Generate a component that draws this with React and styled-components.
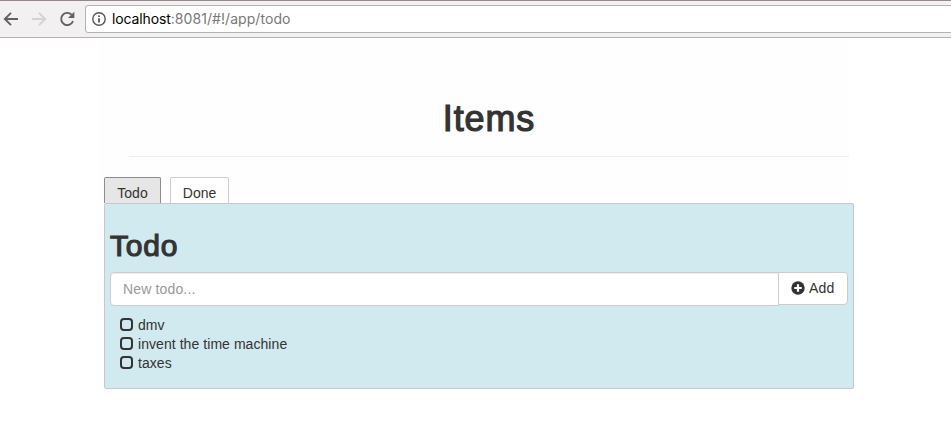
import React from "react";
import styled, { createGlobalStyle } from "styled-components";

const Global = createGlobalStyle`
  * { box-sizing: border-box; }
  body { margin: 0; background: #fff; color: #333; overflow: hidden;
    font: 14px/20px "Liberation Sans", Arial, sans-serif; }
`;

const Toolbar = styled.header`
  display: flex;
  height: 38px;
  padding-top: 4px;
  background: #f2f0f1;
  border-top: 1px solid #948889;
  border-bottom: 1px solid #b3b1b2;
`;
const NavIcons = styled.svg`
  width: 85px;
  height: 28px;
  flex: none;
`;
const Address = styled.div`
  flex: 1;
  height: 28px;
  display: flex;
  align-items: center;
  padding-left: 6px;
  margin-right: -4px;
  background: #fff;
  border: 1px solid #b3b1b2;
  border-radius: 3px;
  font: 14px/26px Inter, sans-serif;
  letter-spacing: 0.06px;
  color: #777;
  white-space: nowrap;
`;
const InfoIcon = styled.svg`
  width: 14px;
  height: 14px;
  margin-right: 6px;
`;
const Host = styled.span`
  color: #000;
  letter-spacing: -0.12px;
`;
const Page = styled.main`
  width: 750px;
  margin-left: 99px;
`;
const Top = styled.div`
  height: 165px;
  background: #fefefe;
`;
const PageHeader = styled.div`
  height: 119px;
  margin-left: 30px;
  margin-bottom: 20px;
  padding-top: 61px;
  border-bottom: 1px solid #eee;
  text-align: center;
`;
const Heading = styled.h1`
  margin: 0;
  font-size: 36px;
  line-height: 40px;
  font-weight: 400;
  letter-spacing: 0.9px;
  -webkit-text-stroke: 1.2px #333;
`;
const Tabs = styled.nav`
  display: flex;
  gap: 9px;
  padding-left: 5px;
`;
const Tab = styled.button`
  width: ${(p) => p.$width}px;
  height: 26px;
  padding: 5px 0 0;
  border: 1px solid ${(p) => (p.$active ? "#8c8c8c" : "#ccc")};
  border-bottom: 0;
  border-radius: 2px 2px 0 0;
  background: ${(p) => (p.$active ? "#e6e6e6" : "#fff")};
  color: #333;
  font: inherit;
`;
const Panel = styled.section`
  width: 750px;
  height: 186px;
  margin-left: 5px;
  padding: 25px 5px 0;
  border: 1px solid #c8c8cc;
  border-radius: 2px;
  background: #d1eaf0;
`;
const PanelTitle = styled.h2`
  margin: 0 0 9px;
  font-size: 30px;
  line-height: 34px;
  font-weight: 400;
  letter-spacing: 0.8px;
  -webkit-text-stroke: 1.2px #333;
`;
const InputGroup = styled.div`
  display: flex;
  align-items: flex-start;
`;
const Field = styled.input`
  width: 669px;
  height: 34px;
  padding: 0 12px;
  border: 1px solid #ccc;
  border-radius: 4px 0 0 4px;
  box-shadow: inset 0 1px 1px rgba(0, 0, 0, 0.075);
  font: inherit;
  letter-spacing: 0.15px;
  &::placeholder { color: #999; opacity: 1; }
`;
const AddButton = styled.button`
  display: flex;
  align-items: center;
  gap: 4px;
  width: 70px;
  height: 33px;
  margin-left: -1px;
  padding: 0 0 1px 12px;
  border: 1px solid #ccc;
  border-radius: 0 4px 4px 0;
  background: #fff;
  color: #333;
  font: inherit;
  letter-spacing: 0.2px;
`;
const List = styled.ul`
  list-style: none;
  margin: 9px 0 0;
  padding: 0 0 0 10px;
  letter-spacing: 0.06px;
`;
const Item = styled.li`
  display: flex;
  align-items: center;
  gap: 5px;
  height: 19px;
`;
const Checkbox = styled.span`
  width: 13px;
  height: 13px;
  border: 2px solid #333;
  border-radius: 4px;
`;

export default function App() {
  return (
    <>
      <Global />
      <Toolbar>
        <NavIcons viewBox="0 0 85 28" fill="none" strokeWidth="1.9">
          <path d="M18 14H5.2M11 7.8L4.8 14L11 20.2" stroke="#606060" />
          <path d="M32 14H44.8M39 7.8L45.2 14L39 20.2" stroke="#d4d2d3" />
          <path d="M71.6 9.7A6.1 6.1 0 1 0 73 16" stroke="#606060" />
          <path d="M74.3 6.8V13H68Z" fill="#606060" />
        </NavIcons>
        <Address>
          <InfoIcon viewBox="0 0 14 14" fill="none" stroke="#555">
            <circle cx="7" cy="7" r="6.2" strokeWidth="1.4" />
            <path d="M7 6.3V10.5M7 3.4V5" strokeWidth="1.8" />
          </InfoIcon>
          <Host>localhost</Host>:8081/#!/app/todo
        </Address>
      </Toolbar>
      <Page>
        <Top>
          <PageHeader><Heading>Items</Heading></PageHeader>
          <Tabs>
            <Tab $active $width={57}>Todo</Tab>
            <Tab $width={59}>Done</Tab>
          </Tabs>
        </Top>
        <Panel>
          <PanelTitle>Todo</PanelTitle>
          <InputGroup>
            <Field placeholder="New todo..." />
            <AddButton>
              <svg width="14" height="14" viewBox="0 0 14 14">
                <circle cx="7" cy="7" r="6.7" fill="#333" />
                <path d="M7 3.3V10.7M3.3 7H10.7" stroke="#fff" strokeWidth="2.2" />
              </svg>
              Add
            </AddButton>
          </InputGroup>
          <List>
            {["dmv", "invent the time machine", "taxes"].map((t) => (
              <Item key={t}><Checkbox />{t}</Item>
            ))}
          </List>
        </Panel>
      </Page>
    </>
  );
}
